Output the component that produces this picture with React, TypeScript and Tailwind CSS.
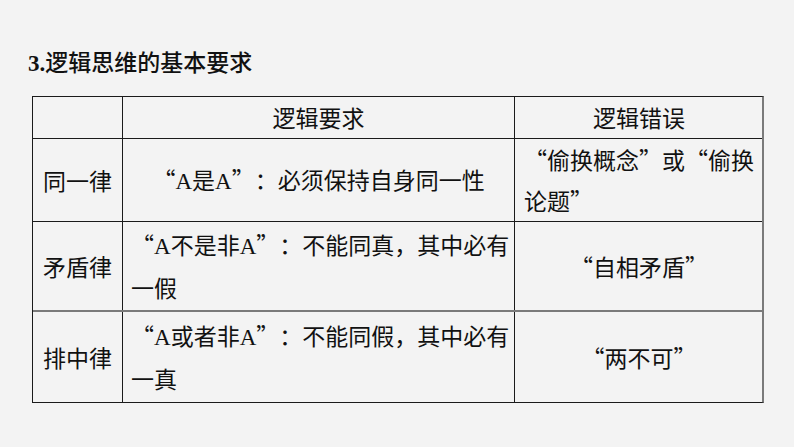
const cjk = "font-['Noto_Sans_CJK_SC',sans-serif]"

function A() {
  return <span className="font-['Liberation_Serif','Noto_Sans_CJK_SC',serif]">A</span>
}

// full-width curly quotes, as in the slide's font
function L() {
  return <span className="inline-block w-[1em] text-right">“</span>
}
function R() {
  return <span className="inline-block w-[1em] text-left">”</span>
}

const rows = [
  {
    law: '同一律',
    h: 'h-[83px]',
    req: (
      <div className="w-full text-center whitespace-nowrap">
        <L />
        <A />是<A />
        <R />：必须保持自身同一性
      </div>
    ),
    err: (
      <div className="w-full pl-[9px] whitespace-nowrap">
        <div>
          <L />偷换概念<R />或<L />偷换
        </div>
        <div>
          论题<R />
        </div>
      </div>
    ),
    divider: 'border-b border-[#1a1a1a]',
  },
  {
    law: '矛盾律',
    h: 'h-[90px]',
    req: (
      <div className="w-full pl-[8px] whitespace-nowrap">
        <div>
          <L />
          <A />不是非<A />
          <R />：不能同真，其中必有
        </div>
        <div>一假</div>
      </div>
    ),
    err: (
      <div className="w-full text-center">
        <L />自相矛盾<R />
      </div>
    ),
    divider: 'border-b-2 border-[#7a7a7a]',
  },
  {
    law: '排中律',
    h: 'h-[90px]',
    req: (
      <div className="w-full pl-[8px] whitespace-nowrap">
        <div>
          <L />
          <A />或者非<A />
          <R />：不能同假，其中必有
        </div>
        <div>一真</div>
      </div>
    ),
    err: (
      <div className="w-full text-center">
        <L />两不可<R />
      </div>
    ),
    divider: '',
  },
]

export default function App() {
  return (
    <div className={`w-[794px] h-[447px] bg-[#f3f3f3] text-[#111] ${cjk} overflow-hidden`}>
      <div className="pt-[45px] pl-[28px] text-[23px] leading-[33px] font-medium">
        <span className="font-['Liberation_Serif',serif] font-bold">3.</span>
        逻辑思维的基本要求
      </div>

      <div className="mt-[16px] ml-[32px] w-[732px] border-t border-l border-[#1a1a1a] border-r-2 border-r-[#7a7a7a] border-b border-b-[#1a1a1a] text-[23px] leading-[41px]">
        <div className="grid grid-cols-[90px_392px_248px] h-[42px] border-b border-[#1a1a1a]">
          <div className="border-r border-[#1a1a1a]" />
          <div className="border-r border-[#1a1a1a] flex items-center justify-center">逻辑要求</div>
          <div className="flex items-center justify-center">逻辑错误</div>
        </div>
        {rows.map((r) => (
          <div key={r.law} className={`grid grid-cols-[90px_392px_248px] ${r.h} ${r.divider}`}>
            <div className="border-r border-[#1a1a1a] flex items-center justify-center">{r.law}</div>
            <div className="border-r border-[#1a1a1a] flex items-center">{r.req}</div>
            <div className="flex items-center">{r.err}</div>
          </div>
        ))}
      </div>
    </div>
  )
}
